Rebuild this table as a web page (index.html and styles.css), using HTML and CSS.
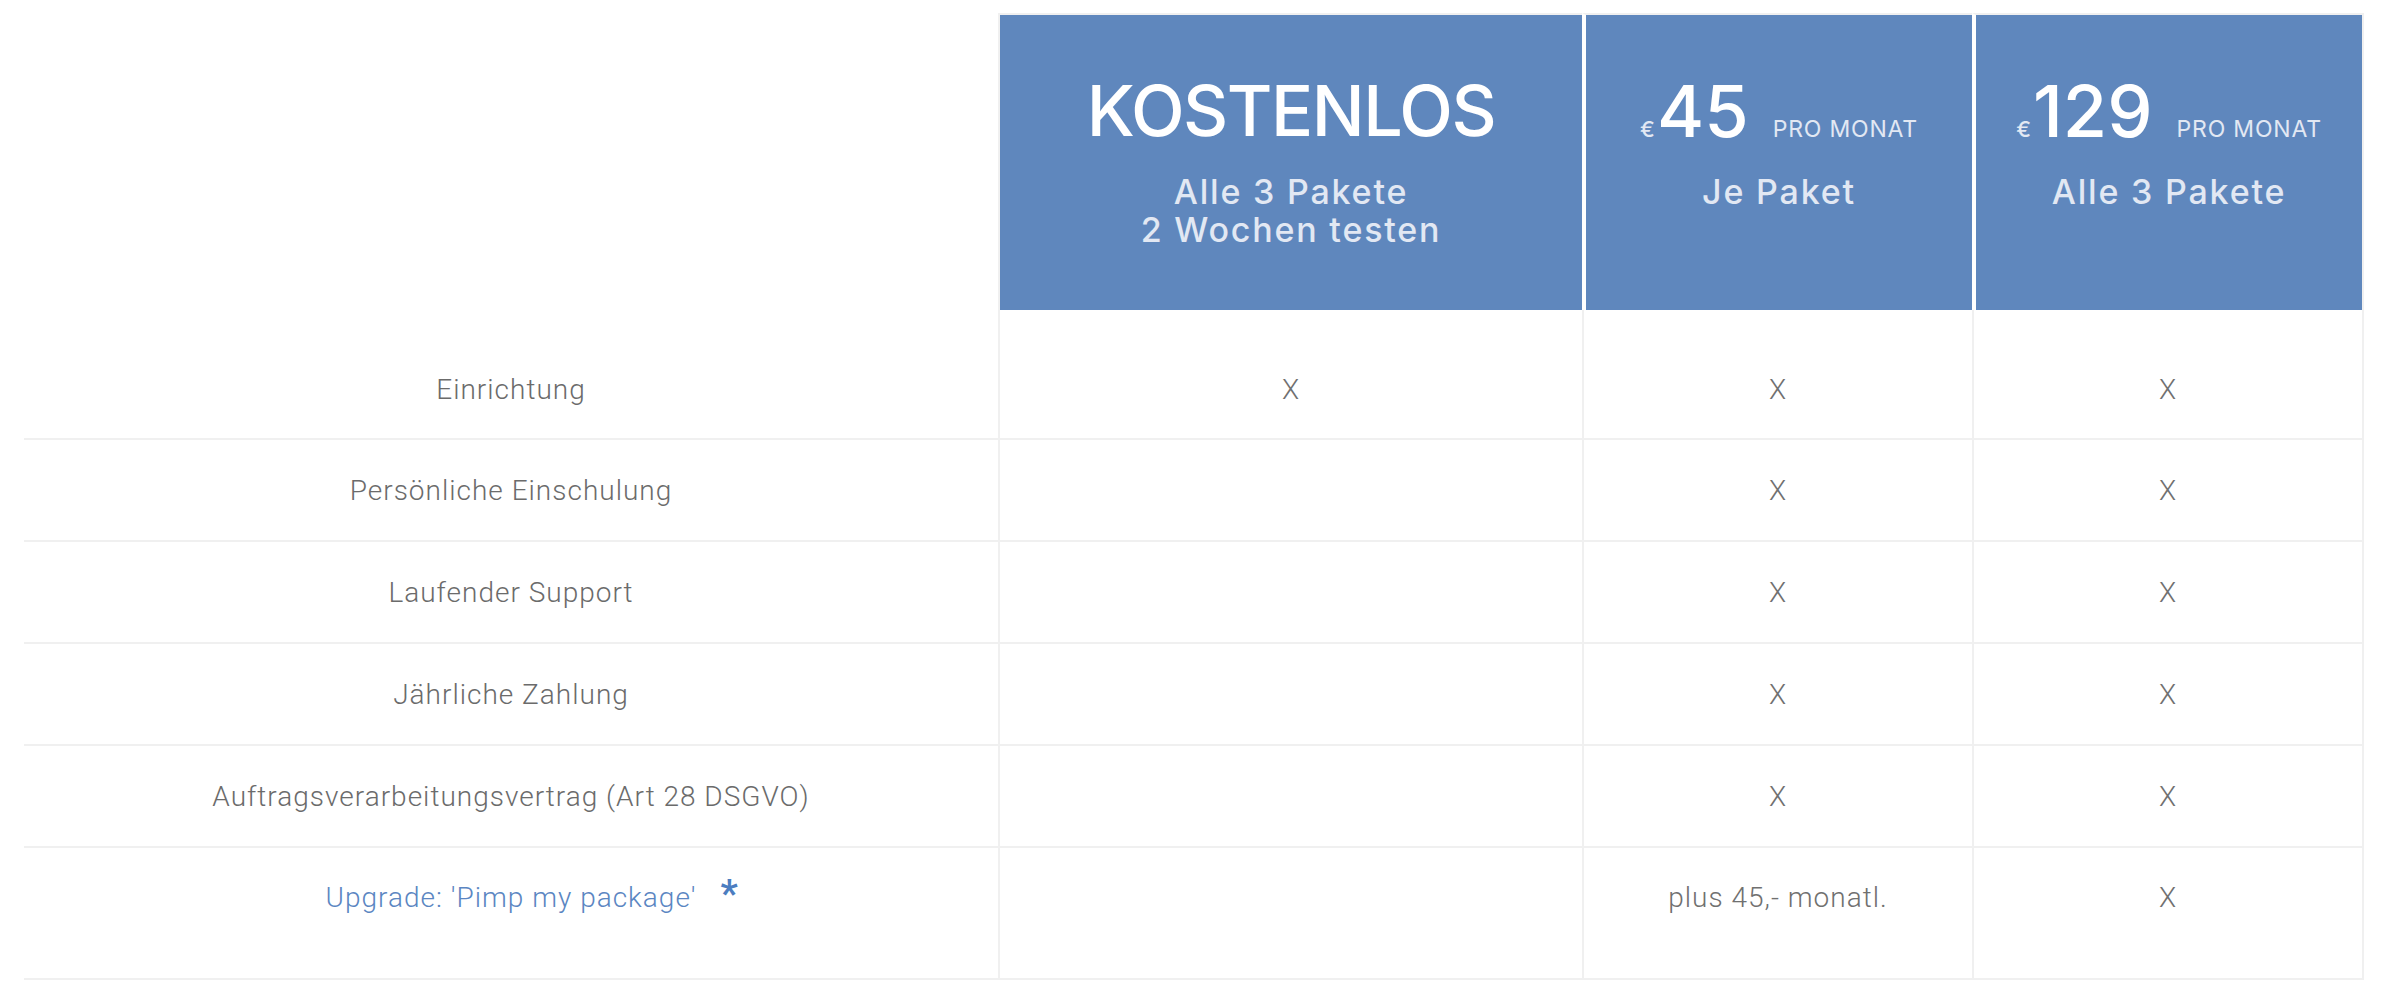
FILE: index.html
```html
<!DOCTYPE html>
<html lang="de">
<head>
  <meta charset="UTF-8">
  <meta name="viewport" content="width=device-width, initial-scale=1.0">
  <title>Preise</title>
  <link rel="stylesheet" href="styles.css">
</head>
<body>
  <div class="pricing">

    <!-- Plan header -->
    <div class="row head">
      <div class="label"></div>
      <div class="plan first-col">
        <div class="plan-title">KOSTENLOS</div>
        <div class="plan-sub">Alle 3 Pakete<br>2 Wochen testen</div>
      </div>
      <div class="plan">
        <div class="price"><span class="cur">€</span><span class="amount">45</span><span class="per">PRO MONAT</span></div>
        <div class="plan-sub">Je Paket</div>
      </div>
      <div class="plan last-col">
        <div class="price"><span class="cur">€</span><span class="amount">129</span><span class="per">PRO MONAT</span></div>
        <div class="plan-sub">Alle 3 Pakete</div>
      </div>
    </div>

    <!-- Features -->
    <div class="row top">
      <div class="label">Einrichtung</div>
      <div class="cell">X</div>
      <div class="cell">X</div>
      <div class="cell last-col">X</div>
    </div>

    <div class="row">
      <div class="label">Persönliche Einschulung</div>
      <div class="cell"></div>
      <div class="cell">X</div>
      <div class="cell last-col">X</div>
    </div>

    <div class="row">
      <div class="label">Laufender Support</div>
      <div class="cell"></div>
      <div class="cell">X</div>
      <div class="cell last-col">X</div>
    </div>

    <div class="row">
      <div class="label">Jährliche Zahlung</div>
      <div class="cell"></div>
      <div class="cell">X</div>
      <div class="cell last-col">X</div>
    </div>

    <div class="row">
      <div class="label">Auftragsverarbeitungsvertrag (Art 28 DSGVO)</div>
      <div class="cell"></div>
      <div class="cell">X</div>
      <div class="cell last-col">X</div>
    </div>

    <div class="row bottom">
      <div class="label"><a href="#" class="upgrade">Upgrade: 'Pimp my package'<span class="star">*</span></a></div>
      <div class="cell"></div>
      <div class="cell">plus 45,- monatl.</div>
      <div class="cell last-col">X</div>
    </div>

  </div>
</body>
</html>
```

FILE: styles.css
```css
body {
  margin: 0;
  padding: 0;
  background: #fff;
  font-family: Roboto, Arial, sans-serif;
}

.pricing {
  width: 2340px;
  margin: 13px 0 0 24px;
}

.row {
  display: grid;
  grid-template-columns: 974px 584px 390px 392px;
  height: 102px;
}

.row > div {
  box-sizing: border-box;
  display: flex;
  align-items: center;
  justify-content: center;
}

/* header */
.row.head {
  height: 297px;
}

.row.head .label {
  border: none;
}

.plan {
  flex-direction: column;
  justify-content: flex-start !important;
  padding-top: 54px;
  background: #5f87bd;
  border-top: 2px solid #f0f0f0;
  border-left: 4px solid #fff;
  font-family: Inter, sans-serif;
  color: #fff;
  text-align: center;
}

.plan.first-col {
  border-left: 2px solid #f0f0f0;
}

.plan.last-col {
  border-right: 2px solid #f0f0f0;
}

.plan-title {
  font-size: 70px;
  line-height: 84px;
  font-weight: 500;
  letter-spacing: -1.5px;
}

.price {
  font-size: 72px;
  line-height: 84px;
  font-weight: 500;
  white-space: nowrap;
}

.price .cur {
  font-size: 22px;
  line-height: 1;
  margin-right: 2px;
  color: #e2e8f3;
}

.price .per {
  font-size: 23px;
  line-height: 1;
  margin-left: 24px;
  letter-spacing: 0.8px;
  color: #e2e8f3;
  font-weight: 400;
}

.plan-sub {
  margin-top: 20px;
  font-size: 34px;
  line-height: 38px;
  font-weight: 500;
  letter-spacing: 1.8px;
  color: #e2e8f3;
}

/* body rows */
.label {
  border-bottom: 2px solid #f0f0f0;
  font-size: 28px;
  font-weight: 300;
  letter-spacing: 1px;
  color: #6b6b6b;
}

.cell {
  border-left: 2px solid #f0f0f0;
  border-bottom: 2px solid #f0f0f0;
  font-size: 28px;
  font-weight: 300;
  letter-spacing: 1px;
  color: #707070;
}

.cell.last-col {
  border-right: 2px solid #f0f0f0;
}

.row.top {
  height: 130px;
}

.row.top > div {
  padding-top: 30px;
}

.row.bottom {
  height: 132px;
}

.row.bottom > div {
  padding-bottom: 32px;
}

.upgrade {
  position: relative;
  color: #5b86c2;
  text-decoration: none;
}

.star {
  position: absolute;
  left: 100%;
  top: -9px;
  margin-left: 24px;
  font-size: 38px;
  font-weight: 700;
  color: #4c7dc0;
}
```
